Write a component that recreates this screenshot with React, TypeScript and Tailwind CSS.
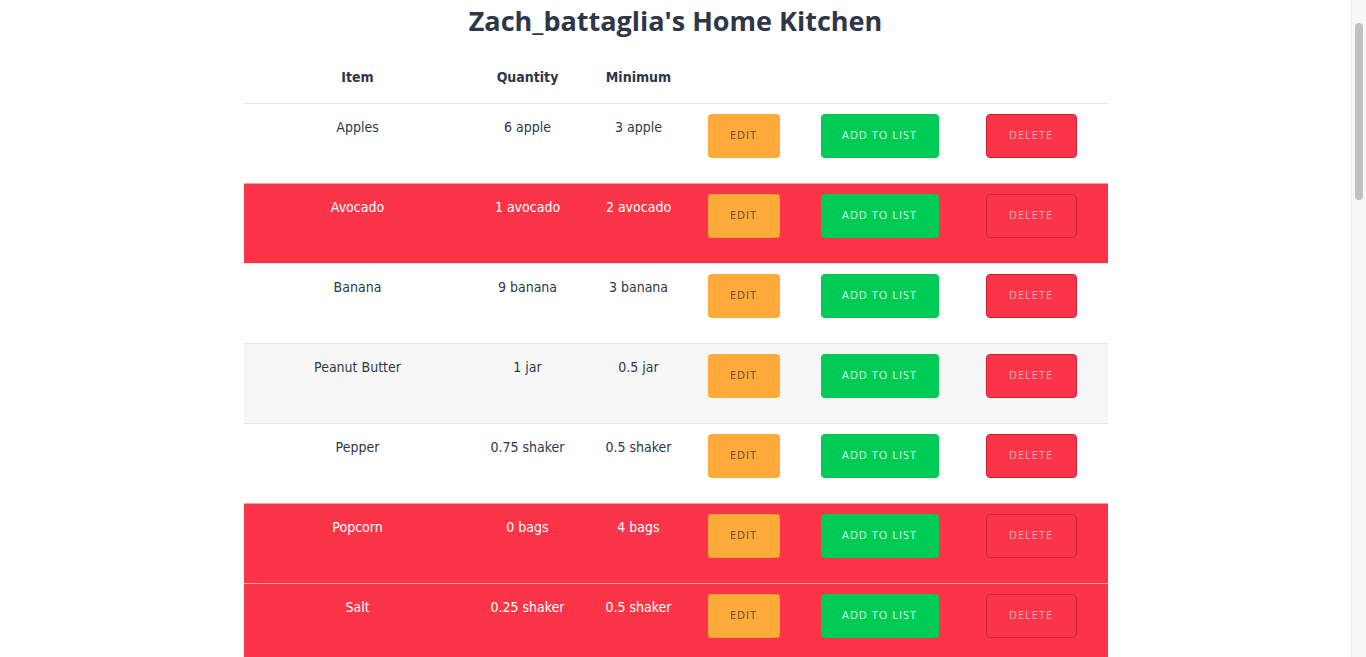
type Item = { name: string; qty: string; min: string; low?: boolean; hover?: boolean };

const items: Item[] = [
  { name: "Apples", qty: "6 apple", min: "3 apple" },
  { name: "Avocado", qty: "1 avocado", min: "2 avocado", low: true },
  { name: "Banana", qty: "9 banana", min: "3 banana" },
  { name: "Peanut Butter", qty: "1 jar", min: "0.5 jar", hover: true },
  { name: "Pepper", qty: "0.75 shaker", min: "0.5 shaker" },
  { name: "Popcorn", qty: "0 bags", min: "4 bags", low: true },
  { name: "Salt", qty: "0.25 shaker", min: "0.5 shaker", low: true },
  { name: "Spaghetti", qty: "2 box", min: "1 box" },
  { name: "Sugar", qty: "1 bag", min: "0.5 bag" },
  { name: "Tomato Sauce", qty: "3 can", min: "2 can" },
  { name: "Tortillas", qty: "1 pack", min: "1 pack" },
  { name: "Vanilla", qty: "0 bottle", min: "1 bottle", low: true },
  { name: "Yogurt", qty: "4 cup", min: "2 cup" },
  { name: "bread", qty: "1 loaf", min: "1 loaf" },
  { name: "butter", qty: "2 stick", min: "1 stick" },
  { name: "cereal", qty: "1 box", min: "1 box" },
  { name: "cheese", qty: "0 block", min: "1 block", low: true },
  { name: "coffee", qty: "1 bag", min: "1 bag" },
  { name: "eggs", qty: "12 egg", min: "6 egg" },
  { name: "flour", qty: "1 bag", min: "0.5 bag" },
  { name: "milk", qty: "0.5 gallon", min: "1 gallon", low: true },
  { name: "oats", qty: "1 tub", min: "1 tub" },
  { name: "olive oil", qty: "1 bottle", min: "0.5 bottle" },
  { name: "onions", qty: "3 onion", min: "2 onion" },
  { name: "rice", qty: "2 bag", min: "1 bag" },
  { name: "tea", qty: "20 bags", min: "10 bags" },
];

const cols = "grid grid-cols-[228px_112px_110px_113px_165px_136px]";
const btnText = "pb-[2px] text-[11px] tracking-[1px] uppercase font-['Open_Sans',sans-serif]";

const Row = ({ item }: { item: Item }) => {
  const bg = item.low
    ? "bg-[#fc3447] text-white border-[#f0a0a8]"
    : item.hover
      ? "bg-[#f7f7f7] text-[#2d3748] border-[#e6e6e6]"
      : "bg-white text-[#2d3748] border-[#e6e6e6]";
  return (
    <div className={`${cols} h-[80px] border-t ${bg}`}>
      <div className="text-center pt-[13px] leading-5">{item.name}</div>
      <div className="text-center pt-[13px] leading-5">{item.qty}</div>
      <div className="text-center pt-[13px] leading-5">{item.min}</div>
      <div className="pl-[14px] pt-[10px]">
        <button className={`w-[72px] h-[44px] rounded bg-[#ffaa3b] text-[#5a4630] ${btnText}`}>Edit</button>
      </div>
      <div className="pl-[14px] pt-[10px]">
        <button className={`w-[118px] h-[44px] rounded bg-[#00cc55] text-[#d6ffe4] ${btnText}`}>Add to list</button>
      </div>
      <div className="pl-[14px] pt-[10px]">
        <button
          className={`w-[91px] h-[44px] rounded border border-[#d0202f] text-[#ffb8c0] ${item.low ? "bg-transparent" : "bg-[#fc3447]"} ${btnText}`}
        >
          Delete
        </button>
      </div>
    </div>
  );
};

export default function App() {
  return (
    <div className="h-screen flex bg-white font-['DejaVu_Sans_Condensed','DejaVu_Sans',sans-serif] text-[14px] text-[#2d3748]">
      <div className="flex-1 overflow-hidden">
        <div className="w-[864px] mx-auto">
          <h1 className="h-[50px] pt-[4px] text-center text-[27px] leading-[34px] font-bold font-['Open_Sans',sans-serif] text-[#2d3748]">
            Zach_battaglia's Home Kitchen
          </h1>
          <div className={`${cols} h-[53px] pt-[2px] items-center font-bold`}>
            <div className="text-center">Item</div>
            <div className="text-center">Quantity</div>
            <div className="text-center">Minimum</div>
            <div />
            <div />
            <div />
          </div>
          {items.map((item, i) => (
            <Row key={i} item={item} />
          ))}
        </div>
      </div>
      {/* scrollbar */}
      <div className="w-[15px] h-full bg-[#f8f8f8] border-l border-[#ebebeb] pt-[23px] pl-[3px]">
        <div className="w-[8px] h-[177px] rounded-full bg-[#c1c1c1]" />
      </div>
    </div>
  );
}
